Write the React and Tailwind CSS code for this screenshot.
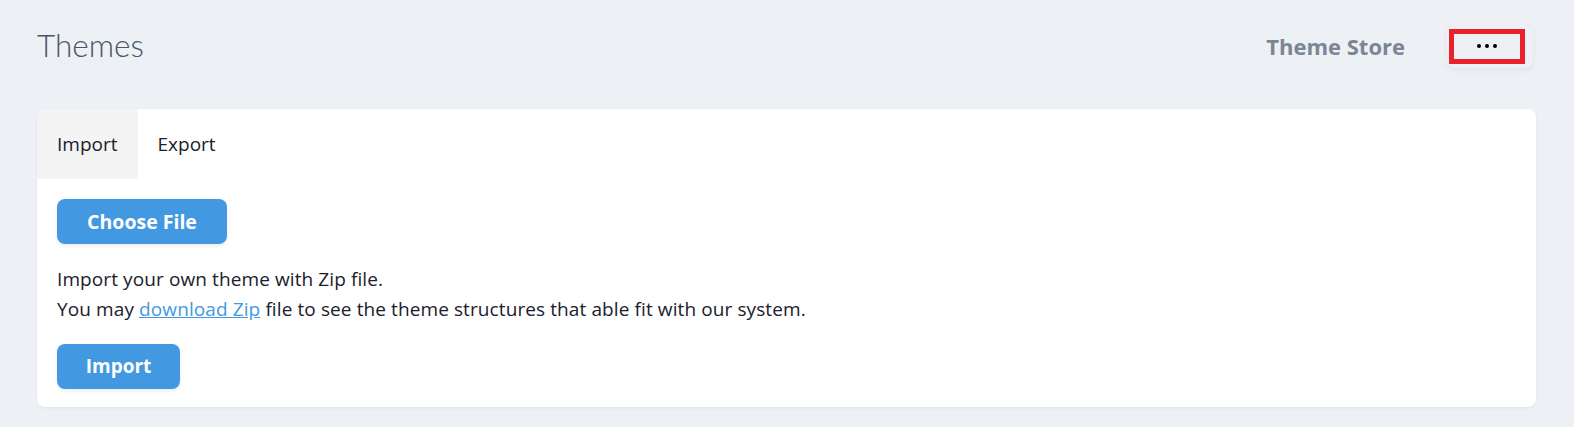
export default function App() {
  return (
    <div className="min-h-screen bg-[#edf0f4] px-[37px] pr-[38px] pt-[24px] font-['Open_Sans',sans-serif]">
      <header className="flex h-[44px] items-center justify-between pr-[3px]">
        <h1 className="font-['Lato',sans-serif] text-[31.5px] font-light leading-none text-[#4a5568]">Themes</h1>
        <div className="flex items-center gap-[42px]">
          <a className="text-[22px] font-bold text-[#7b8594]">Theme Store</a>
          <div className="flex h-[43px] w-[86px] items-center rounded-lg bg-[#edf0f4] pl-[2px] shadow-[0_2px_6px_rgba(0,0,0,0.06)]">
            <button className="flex h-[35px] w-[76px] items-center justify-center gap-[4px] border-[5px] border-[#e8212a]">
              <span className="h-[4px] w-[4px] rounded-full bg-black" />
              <span className="h-[4px] w-[4px] rounded-full bg-black" />
              <span className="h-[4px] w-[4px] rounded-full bg-black" />
            </button>
          </div>
        </div>
      </header>

      <div className="mt-[41px] overflow-hidden rounded-lg bg-white shadow-[0_1px_3px_rgba(0,0,0,0.06)]">
        <div className="flex h-[70px] text-[19px] text-[#1a202c]">
          <button className="bg-[#f4f4f4] px-[20px]">Import</button>
          <button className="px-[20px]">Export</button>
        </div>
        <div className="px-[20px] pt-[20px] pb-[18px]">
          <button className="h-[45px] w-[170px] rounded-lg bg-[#4299e1] text-[19.5px] font-bold text-white shadow-[0_2px_4px_rgba(0,0,0,0.08)]">
            Choose File
          </button>
          <div className="mt-[20px] text-[19px] leading-[30px] tracking-[0.1px] text-[#1a202c]">
            <p>Import your own theme with Zip file.</p>
            <p>
              You may{' '}
              <a className="text-[#4299e1] underline">download Zip</a> file to see the theme structures that able fit with our system.
            </p>
          </div>
          <button className="mt-[20px] h-[45px] w-[123px] rounded-lg bg-[#4299e1] text-[19px] font-bold text-white shadow-[0_2px_4px_rgba(0,0,0,0.08)]">
            Import
          </button>
        </div>
      </div>
    </div>
  )
}
